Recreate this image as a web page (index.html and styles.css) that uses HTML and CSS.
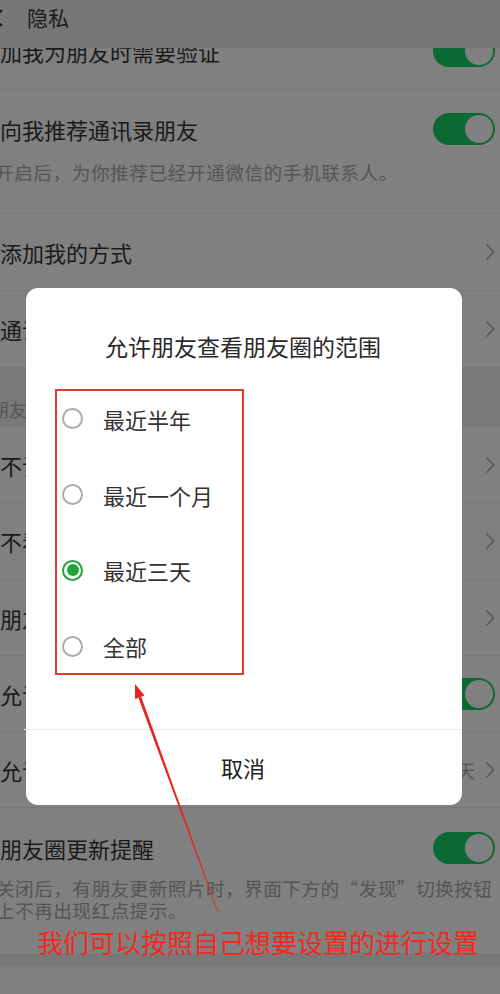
FILE: index.html
```html
<!DOCTYPE html>
<html lang="zh-CN">
<head>
<meta charset="utf-8">
<title>隐私</title>
<link rel="stylesheet" href="styles.css">
</head>
<body>
<div class="screen">
  <header class="topbar">
    <svg class="back" width="14" height="20" viewBox="0 0 14 20"><path d="M10 2 L2 10 L10 18" fill="none" stroke="#1a1a1a" stroke-width="2"/></svg>
    <span class="topbar-title">隐私</span>
  </header>

  <main class="list">
    <div class="row r77">
      <span class="title">加我为朋友时需要验证</span>
      <span class="toggle"><span class="knob"></span></span>
    </div>
    <div class="row tall r124">
      <div class="head">
        <span class="title">向我推荐通讯录朋友</span>
        <span class="toggle"><span class="knob"></span></span>
      </div>
      <div class="sub">开启后，为你推荐已经开通微信的手机联系人。</div>
    </div>
    <div class="row r77">
      <span class="title">添加我的方式</span>
      <svg class="chev" width="10" height="18" viewBox="0 0 10 18"><path d="M1.5 1.5 L8.5 9 L1.5 16.5" fill="none" stroke="#575757" stroke-width="1.6"/></svg>
    </div>
    <div class="row r76 noline">
      <span class="title">通讯录黑名单</span>
      <svg class="chev" width="10" height="18" viewBox="0 0 10 18"><path d="M1.5 1.5 L8.5 9 L1.5 16.5" fill="none" stroke="#575757" stroke-width="1.6"/></svg>
    </div>
    <div class="section"><span class="section-label">朋友圈</span></div>
    <div class="row r76">
      <span class="title">不让他（她）看我的朋友圈</span>
      <svg class="chev" width="10" height="18" viewBox="0 0 10 18"><path d="M1.5 1.5 L8.5 9 L1.5 16.5" fill="none" stroke="#575757" stroke-width="1.6"/></svg>
    </div>
    <div class="row r77">
      <span class="title">不看他（她）的朋友圈</span>
      <svg class="chev" width="10" height="18" viewBox="0 0 10 18"><path d="M1.5 1.5 L8.5 9 L1.5 16.5" fill="none" stroke="#575757" stroke-width="1.6"/></svg>
    </div>
    <div class="row r76">
      <span class="title">朋友圈背景</span>
      <svg class="chev" width="10" height="18" viewBox="0 0 10 18"><path d="M1.5 1.5 L8.5 9 L1.5 16.5" fill="none" stroke="#575757" stroke-width="1.6"/></svg>
    </div>
    <div class="row r77">
      <span class="title">允许陌生人查看十条朋友圈</span>
      <span class="toggle"><span class="knob"></span></span>
    </div>
    <div class="row r75">
      <span class="title">允许朋友查看朋友圈的范围</span>
      <span class="value">最近三天
        <svg class="chev" width="10" height="18" viewBox="0 0 10 18"><path d="M1.5 1.5 L8.5 9 L1.5 16.5" fill="none" stroke="#575757" stroke-width="1.6"/></svg>
      </span>
    </div>
    <div class="row tall2 r145 noline">
      <div class="head">
        <span class="title">朋友圈更新提醒</span>
        <span class="toggle"><span class="knob"></span></span>
      </div>
      <div class="sub wide">关闭后，有朋友更新照片时，界面下方的“发现”切换按钮<br>上不再出现红点提示。</div>
    </div>
    <div class="band"></div>
  </main>

  <div class="dialog">
    <div class="dialog-title">允许朋友查看朋友圈的范围</div>
    <div class="options">
      <div class="option">
        <span class="radio"></span><span class="opt-label">最近半年</span>
      </div>
      <div class="option">
        <span class="radio"></span><span class="opt-label">最近一个月</span>
      </div>
      <div class="option">
        <span class="radio checked"><span class="dot"></span></span><span class="opt-label">最近三天</span>
      </div>
      <div class="option">
        <span class="radio"></span><span class="opt-label">全部</span>
      </div>
    </div>
    <div class="dialog-spacer"></div>
    <div class="dialog-footer">取消</div>
  </div>

  <svg class="arrow" width="500" height="994" viewBox="0 0 500 994">
    <polygon points="141.2,696.7 138.4,697.7 217.7,912.2 218.4,911.9" fill="#e8231c"/>
    <polygon points="135,684 144.5,695.5 135.1,698.9" fill="#e8231c"/>
  </svg>

  <div class="note">我们可以按照自己想要设置的进行设置</div>
</div>
</body>
</html>
```

FILE: styles.css
```css
html, body {
  margin: 0;
  padding: 0;
}
body {
  width: 500px;
  height: 994px;
  overflow: hidden;
  background: #808080;
  font-family: "Noto Sans CJK SC", "Noto Sans", sans-serif;
}
.screen {
  position: relative;
  width: 500px;
  height: 994px;
  overflow: hidden;
  background: #808080;
}
.topbar {
  position: absolute;
  top: 0;
  left: 0;
  right: 0;
  height: 48px;
  background: #777777;
  z-index: 2;
  display: flex;
  align-items: flex-start;
}
.back {
  margin-left: -8px;
  margin-top: 8px;
}
.topbar-title {
  margin-left: 21px;
  font-size: 21px;
  line-height: 34px;
  color: #1a1a1a;
}
.list {
  padding-top: 13px;
  display: flex;
  flex-direction: column;
}
.row {
  box-sizing: border-box;
  display: flex;
  align-items: center;
  justify-content: space-between;
  padding-right: 5px;
  border-bottom: 1px solid #777777;
}
.row.noline { border-bottom: none; }
.r75 { height: 75px; }
.r76 { height: 76px; }
.r77 { height: 77px; }
.r124 { height: 124px; }
.r145 { height: 145px; }
.title {
  font-size: 22px;
  line-height: 30px;
  color: #1a1a1a;
  white-space: nowrap;
}
.tall, .tall2 {
  flex-direction: column;
  align-items: stretch;
  justify-content: flex-start;
}
.tall { padding-top: 17px; }
.tall2 { padding-top: 18px; }
.head {
  height: 44px;
  display: flex;
  align-items: center;
  justify-content: space-between;
}
.sub {
  margin-left: -5px;
  font-size: 18.7px;
  line-height: 22px;
  letter-spacing: 0.5px;
  color: #555555;
  white-space: nowrap;
}
.tall .sub { margin-top: 10px; }
.tall2 .sub { margin-top: 7px; }
.sub.wide { letter-spacing: 0.4px; margin-left: -4px; }
.toggle {
  box-sizing: border-box;
  width: 62px;
  height: 32px;
  border-radius: 16px;
  background: #0b6a34;
  display: flex;
  justify-content: flex-end;
  align-items: center;
  padding: 2px;
  flex: none;
}
.knob {
  width: 28px;
  height: 28px;
  border-radius: 50%;
  background: #808080;
}
.chev { flex: none; }
.value {
  display: flex;
  align-items: center;
  gap: 10px;
  font-size: 18px;
  color: #555555;
}
.section {
  height: 60px;
  background: #787878;
  box-sizing: border-box;
  padding-top: 30px;
}
.section-label {
  display: block;
  margin-left: -9px;
  font-size: 18px;
  line-height: 24px;
  color: #555555;
}
.band {
  height: 13px;
  background: #787878;
}

/* dialog */
.dialog {
  position: absolute;
  left: 26px;
  top: 288px;
  width: 436px;
  height: 517px;
  background: #ffffff;
  border-radius: 12px;
  z-index: 3;
  display: flex;
  flex-direction: column;
}
.dialog-title {
  padding-top: 42px;
  height: 32px;
  line-height: 32px;
  font-size: 23px;
  color: #2a2a2a;
  text-align: center;
  margin-left: -2px;
}
.options {
  box-sizing: border-box;
  margin-top: 27px;
  margin-left: 29px;
  width: 189px;
  height: 286px;
  border: 2px solid #dd3b30;
  padding: 1px 0 0 5px;
  display: flex;
  flex-direction: column;
  gap: 22.5px;
}
.option {
  height: 54px;
  display: flex;
  align-items: center;
  gap: 20px;
}
.radio {
  box-sizing: border-box;
  width: 21px;
  height: 21px;
  border-radius: 50%;
  border: 2px solid #ababab;
  display: flex;
  align-items: center;
  justify-content: center;
  flex: none;
}
.radio.checked {
  border: 2px solid #22a33a;
}
.dot {
  width: 12px;
  height: 12px;
  border-radius: 50%;
  background: #22a33a;
}
.opt-label {
  font-size: 22px;
  line-height: 30px;
  color: #333333;
}
.dialog-spacer { flex: 1; }
.dialog-footer {
  height: 76px;
  box-sizing: border-box;
  border-top: 1px solid #ebebeb;
  text-align: center;
  font-size: 22px;
  line-height: 74px;
  color: #222222;
  margin-left: -2px;
}

/* annotation */
.arrow {
  position: absolute;
  left: 0;
  top: 0;
  z-index: 4;
}
.note {
  position: absolute;
  left: 37px;
  top: 926px;
  z-index: 4;
  font-size: 26px;
  line-height: 32px;
  color: #f2281e;
  white-space: nowrap;
}
```
